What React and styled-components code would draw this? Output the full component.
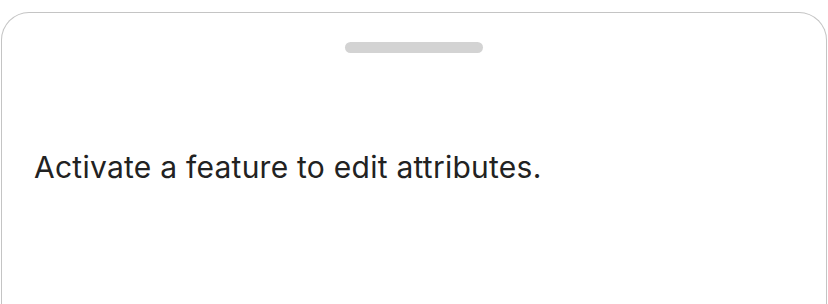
import React from "react"
import styled, { createGlobalStyle } from "styled-components"

const GlobalStyle = createGlobalStyle`
  html, body {
    margin: 0;
    padding: 0;
    background: #fff;
  }
  body {
    font-family: Inter, "Noto Sans", "Liberation Sans", sans-serif;
    overflow: hidden;
  }
`

const Sheet = styled.section`
  margin: 12px 1px 0 1px;
  min-height: 400px;
  border: 1.5px solid #c4c4c4;
  border-bottom: none;
  border-radius: 28px 28px 0 0;
  background: #fff;
  display: flex;
  flex-direction: column;
`

const HandleRow = styled.div`
  display: flex;
  justify-content: center;
  padding-top: 28.5px;
`

const Handle = styled.div`
  width: 138px;
  height: 11px;
  border-radius: 6px;
  background: #d3d3d3;
`

const Message = styled.p`
  margin: 96px 0 0 0;
  padding: 0 32px;
  font-size: 30px;
  line-height: 36px;
  color: #222;
  letter-spacing: 0.25px;
`

const App = () => {
  return (
    <>
      <GlobalStyle />
      <Sheet>
        <HandleRow>
          <Handle />
        </HandleRow>
        <Message>Activate a feature to edit attributes.</Message>
      </Sheet>
    </>
  )
}

export default App
